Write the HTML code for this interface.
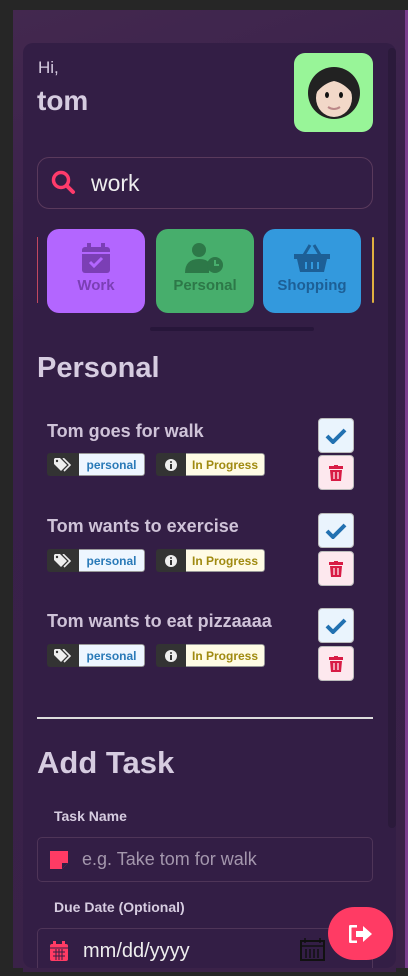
<!DOCTYPE html>
<html><head><meta charset="utf-8"><style>
*{margin:0;padding:0;box-sizing:border-box}
html{width:408px;height:976px;overflow:hidden}
body{width:408px;height:976px;background:#262626;position:relative;overflow:hidden;font-family:"Liberation Sans",sans-serif}
.a{position:absolute}
.frame{left:13px;top:10px;width:392px;height:962px;background:linear-gradient(160deg,#43284f 0%,#38204a 30%,#3a2248 100%)}
.edge{left:405px;top:10px;width:3px;height:962px;background:#7a3e8e}
.card{left:23px;top:43px;width:373px;height:925px;background:#331e45;border-radius:10px;overflow:hidden}
.sb{left:388px;top:48px;width:8px;height:780px;background:#2b1a3b;border-radius:4px}
.txt{color:#d6cce0}
.cat{top:229px;width:98px;height:84px;border-radius:12px;text-align:center;font-weight:bold;font-size:15px}
.cat svg{display:block;margin:14px auto 4px}
.title{left:47px;font-size:18px;font-weight:bold;color:#cfc3d8}
.tag{height:23px;border-radius:3px;display:flex;font-size:12px;font-weight:bold;overflow:hidden}
.tag .d{background:#333;width:32px;display:flex;align-items:center;justify-content:center}
.tag .l{display:flex;align-items:center;justify-content:center;border:1px solid #999;border-left:none;border-radius:0 3px 3px 0}
.btn{left:318px;width:36px;height:35px;border-radius:4px;display:flex;align-items:center;justify-content:center;border:1px solid #bbb}
.inp{left:37px;width:336px;border:1px solid #4f3558;border-radius:5px}
</style></head><body>
<div class="a frame"></div><div class="a edge"></div>
<div class="a card"></div>
<div class="a sb"></div>
<div class="a txt" style="left:38px;top:58px;font-size:17px">Hi,</div>
<div class="a txt" style="left:37px;top:85px;font-size:28px;font-weight:bold">tom</div>
<div class="a" style="left:294px;top:53px;width:79px;height:79px;background:#98f598;border-radius:11px">
<svg width="79" height="79" viewBox="0 0 79 79"><circle cx="40" cy="40" r="26" fill="#222"/><ellipse cx="40" cy="45" rx="18" ry="19" fill="#f2d8c8"/><path d="M22 40 Q24 20 40 22 Q56 20 58 40 Q50 30 40 28 Q30 30 22 40Z" fill="#222"/><ellipse cx="33" cy="42" rx="2" ry="3" fill="#111"/><ellipse cx="47" cy="42" rx="2" ry="3" fill="#111"/><path d="M34 54 Q40 58 46 54" stroke="#b88" stroke-width="2" fill="none"/></svg></div>
<div class="a" style="left:37px;top:157px;width:336px;height:52px;border:1px solid #5a3a5c;border-radius:12px"></div>
<svg class="a" style="left:51px;top:170px" width="26" height="26" viewBox="0 0 26 26"><circle cx="10" cy="10" r="7.5" stroke="#ff3b6b" stroke-width="3.5" fill="none"/><line x1="15.5" y1="15.5" x2="22" y2="22" stroke="#ff3b6b" stroke-width="4" stroke-linecap="round"/></svg>
<div class="a" style="left:91px;top:170px;font-size:23px;color:#eee">work</div>
<div class="a" style="left:37px;top:237px;width:1px;height:66px;background:#c04860"></div>
<div class="a" style="left:372px;top:237px;width:2px;height:66px;background:#e0b040;border-radius:2px"></div>
<div class="a cat" style="left:47px;background:#b366ff;color:#7b3fb5"><svg width="28" height="30" viewBox="0 0 28 30"><rect x="0" y="4" width="28" height="26" rx="3" fill="#7b3fb5"/><rect x="5" y="0" width="4" height="7" fill="#7b3fb5"/><rect x="19" y="0" width="4" height="7" fill="#7b3fb5"/><rect x="0" y="9" width="28" height="2" fill="#b366ff"/><path d="M8 19 L12 23 L20 15" stroke="#b366ff" stroke-width="3" fill="none"/></svg>Work</div>
<div class="a cat" style="left:156px;background:#47ae6c;color:#2d7848"><svg width="40" height="30" viewBox="0 0 40 30"><circle cx="14" cy="7" r="7" fill="#2d7848"/><path d="M0 30 Q0 16 14 16 Q22 16 24 20 L24 30Z" fill="#2d7848"/><circle cx="30" cy="22" r="8" fill="#2d7848"/><path d="M30 17 V22 H34" stroke="#47ae6c" stroke-width="2" fill="none"/></svg>Personal</div>
<div class="a cat" style="left:263px;background:#3399dd;color:#1d5f96"><svg width="36" height="30" viewBox="0 0 36 30"><path d="M10 12 L16 2 M26 12 L20 2" stroke="#1d5f96" stroke-width="3"/><rect x="0" y="11" width="36" height="5" fill="#1d5f96"/><path d="M3 16 H33 L30 29 H6Z" fill="#1d5f96"/><path d="M12 19v7M18 19v7M24 19v7" stroke="#3399dd" stroke-width="2"/></svg>Shopping</div>
<div class="a" style="left:150px;top:327px;width:164px;height:4px;background:#27163a;border-radius:2px"></div>
<div class="a txt" style="left:37px;top:352px;font-size:29px;font-weight:bold">Personal</div>

<div class="a title" style="top:421px">Tom goes for walk</div>
<div class="a title" style="top:516px">Tom wants to exercise</div>
<div class="a title" style="top:611px">Tom wants to eat pizzaaaa</div>

<div class="a tag" style="left:47px;top:453px"><div class="d"><svg width="18" height="14" viewBox="0 0 18 14"><path d="M0 1 V6 L7 13 L13 7 L6 0 H1Z" fill="#eee"/><path d="M9 0 L16 7 L10 13" stroke="#eee" stroke-width="1.6" fill="none"/><circle cx="3" cy="3" r="1.2" fill="#333"/></svg></div><div class="l" style="width:66px;background:#eef6ff;color:#2a7ab8">personal</div></div>
<div class="a tag" style="left:156px;top:453px"><div class="d" style="width:30px"><svg width="12" height="12"><circle cx="6" cy="6" r="6" fill="#eee"/><rect x="5" y="5" width="2" height="5" fill="#333"/><circle cx="6" cy="3" r="1" fill="#333"/></svg></div><div class="l" style="width:79px;background:#fffbe5;color:#a08a10">In Progress</div></div>
<div class="a tag" style="left:47px;top:549px"><div class="d"><svg width="18" height="14" viewBox="0 0 18 14"><path d="M0 1 V6 L7 13 L13 7 L6 0 H1Z" fill="#eee"/><path d="M9 0 L16 7 L10 13" stroke="#eee" stroke-width="1.6" fill="none"/><circle cx="3" cy="3" r="1.2" fill="#333"/></svg></div><div class="l" style="width:66px;background:#eef6ff;color:#2a7ab8">personal</div></div>
<div class="a tag" style="left:156px;top:549px"><div class="d" style="width:30px"><svg width="12" height="12"><circle cx="6" cy="6" r="6" fill="#eee"/><rect x="5" y="5" width="2" height="5" fill="#333"/><circle cx="6" cy="3" r="1" fill="#333"/></svg></div><div class="l" style="width:79px;background:#fffbe5;color:#a08a10">In Progress</div></div>
<div class="a tag" style="left:47px;top:644px"><div class="d"><svg width="18" height="14" viewBox="0 0 18 14"><path d="M0 1 V6 L7 13 L13 7 L6 0 H1Z" fill="#eee"/><path d="M9 0 L16 7 L10 13" stroke="#eee" stroke-width="1.6" fill="none"/><circle cx="3" cy="3" r="1.2" fill="#333"/></svg></div><div class="l" style="width:66px;background:#eef6ff;color:#2a7ab8">personal</div></div>
<div class="a tag" style="left:156px;top:644px"><div class="d" style="width:30px"><svg width="12" height="12"><circle cx="6" cy="6" r="6" fill="#eee"/><rect x="5" y="5" width="2" height="5" fill="#333"/><circle cx="6" cy="3" r="1" fill="#333"/></svg></div><div class="l" style="width:79px;background:#fffbe5;color:#a08a10">In Progress</div></div>

<div class="a btn" style="top:418px;background:#eaf4fd"><svg width="22" height="16"><path d="M2 8 L8 14 L20 2" stroke="#2271b1" stroke-width="4" fill="none"/></svg></div>
<div class="a btn" style="top:455px;background:#fde8ee"><svg width="14" height="16"><rect x="0" y="1" width="14" height="3" fill="#d81b45"/><rect x="5" y="0" width="4" height="2" fill="#d81b45"/><path d="M1 5 H13 L12 16 H2Z" fill="#d81b45"/><path d="M5 7v7M9 7v7" stroke="#fde8ee" stroke-width="1.3"/></svg></div>
<div class="a btn" style="top:513px;background:#eaf4fd"><svg width="22" height="16"><path d="M2 8 L8 14 L20 2" stroke="#2271b1" stroke-width="4" fill="none"/></svg></div>
<div class="a btn" style="top:551px;background:#fde8ee"><svg width="14" height="16"><rect x="0" y="1" width="14" height="3" fill="#d81b45"/><rect x="5" y="0" width="4" height="2" fill="#d81b45"/><path d="M1 5 H13 L12 16 H2Z" fill="#d81b45"/><path d="M5 7v7M9 7v7" stroke="#fde8ee" stroke-width="1.3"/></svg></div>
<div class="a btn" style="top:608px;background:#eaf4fd"><svg width="22" height="16"><path d="M2 8 L8 14 L20 2" stroke="#2271b1" stroke-width="4" fill="none"/></svg></div>
<div class="a btn" style="top:646px;background:#fde8ee"><svg width="14" height="16"><rect x="0" y="1" width="14" height="3" fill="#d81b45"/><rect x="5" y="0" width="4" height="2" fill="#d81b45"/><path d="M1 5 H13 L12 16 H2Z" fill="#d81b45"/><path d="M5 7v7M9 7v7" stroke="#fde8ee" stroke-width="1.3"/></svg></div>

<div class="a" style="left:37px;top:717px;width:336px;height:2px;background:#ddd"></div>
<div class="a txt" style="left:37px;top:745px;font-size:31px;font-weight:bold">Add Task</div>
<div class="a txt" style="left:54px;top:808px;font-size:14px;font-weight:bold">Task Name</div>
<div class="a inp" style="top:837px;height:45px"></div>
<svg class="a" style="left:50px;top:851px" width="18" height="18"><path d="M0 0 H18 V12 L12 18 H0Z" fill="#ff3b64"/><path d="M12 18 V12 H18" fill="#331e45"/></svg>
<div class="a" style="left:82px;top:849px;font-size:18px;color:#a497ad">e.g. Take tom for walk</div>
<div class="a txt" style="left:54px;top:899px;font-size:14px;font-weight:bold">Due Date (Optional)</div>
<div class="a" style="left:37px;top:928px;width:336px;height:40px;border:1px solid #4f3558;border-bottom:none;border-radius:5px 5px 0 0"></div>
<svg class="a" style="left:50px;top:941px" width="18" height="20"><rect x="0" y="3" width="18" height="17" rx="2" fill="#ff3b64"/><rect x="3" y="0" width="3" height="5" fill="#ff3b64"/><rect x="12" y="0" width="3" height="5" fill="#ff3b64"/><path d="M0 7 H18M3 11h12M3 15h12M6 8v11M9 8v11M12 8v11" stroke="#331e45" stroke-width="1"/></svg>
<div class="a" style="left:83px;top:940px;font-size:20px;color:#eee">mm/dd/yyyy</div>
<svg class="a" style="left:300px;top:938px" width="25" height="23"><rect x="1" y="3" width="23" height="19" fill="none" stroke="#111" stroke-width="2"/><path d="M1 8H24M5 0v5M20 0v5M6 11v9M10 11v9M14 11v9M18 11v9" stroke="#111" stroke-width="1.5"/></svg>
<div class="a" style="left:0;top:968px;width:408px;height:8px;background:#262626"></div>
<div class="a" style="left:23px;top:968px;width:373px;height:4px;background:#3a2248"></div>
<div class="a" style="left:328px;top:907px;width:65px;height:53px;background:#ff3b64;border-radius:27px;display:flex;align-items:center;justify-content:center"><svg width="24" height="18" viewBox="0 0 24 18"><path d="M8 1 H3 Q1 1 1 3 V15 Q1 17 3 17 H8" stroke="#fff" stroke-width="3" fill="none"/><path d="M7 6 H14 V1 L23 9 L14 17 V12 H7Z" fill="#fff"/></svg></div>
</body></html>
